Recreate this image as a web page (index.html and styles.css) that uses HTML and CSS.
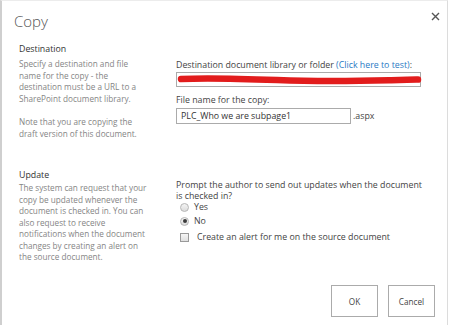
FILE: index.html
```html
<!DOCTYPE html>
<html lang="en">
<head>
<meta charset="utf-8">
<title>Copy</title>
<link rel="stylesheet" href="styles.css">
</head>
<body>
<div class="dialog">
  <header class="titlebar">
    <h1 class="title">Copy</h1>
    <span class="close" aria-label="Close">
      <svg width="9" height="9" viewBox="0 0 9 9"><path d="M1 1L8 8M8 1L1 8" stroke="#555" stroke-width="1.4" fill="none"/></svg>
    </span>
  </header>
  <main class="content">
    <section class="row">
      <div class="left">
        <h2 class="heading">Destination</h2>
        <p class="desc">Specify a destination and file name for the copy - the destination must be a URL to a SharePoint document library.</p>
        <p class="desc note">Note that you are copying the draft version of this document.</p>
      </div>
      <div class="right">
        <div class="label">Destination document library or folder <span class="link">(Click here to test)</span>:</div>
        <div class="field url">
          <svg class="scribble" width="246" height="13" viewBox="0 0 246 13"><path d="M4 6 C 30 4.5, 60 5.5, 100 7 C 140 8.5, 180 8, 212 7.2 C 226 6.8, 236 6.5, 241 6.6" stroke="#e21c1c" stroke-width="6.5" stroke-linecap="round" fill="none"/></svg>
        </div>
        <div class="label file-label">File name for the copy:</div>
        <div class="fileline">
          <div class="field name">PLC_Who we are subpage1</div>
          <span class="ext">.aspx</span>
        </div>
      </div>
    </section>
    <section class="row update">
      <div class="left">
        <h2 class="heading">Update</h2>
        <p class="desc">The system can request that your copy be updated whenever the document is checked in. You can also request to receive notifications when the document changes by creating an alert on the source document.</p>
      </div>
      <div class="right right-update">
        <div class="label prompt">Prompt the author to send out updates when the document is checked in?</div>
        <div class="options">
          <div class="option"><span class="radio"></span><span>Yes</span></div>
          <div class="option"><span class="radio checked"></span><span>No</span></div>
          <div class="option alert"><span class="checkbox"></span><span>Create an alert for me on the source document</span></div>
        </div>
      </div>
    </section>
  </main>
  <footer class="buttons">
    <span class="btn">OK</span>
    <span class="btn">Cancel</span>
  </footer>
</div>
</body>
</html>
```
FILE: styles.css
```css
html, body {
  margin: 0;
  padding: 0;
  background: #fff;
}
body {
  font-family: "Open Sans", "Noto Sans", sans-serif;
  width: 450px;
  height: 325px;
  overflow: hidden;
}
.dialog {
  box-sizing: border-box;
  width: 448px;
  height: 325px;
  border-left: 2px solid #cfcfcf;
  border-top: 1px solid #ececec;
  border-right: 1px solid #dcdcdc;
  display: flex;
  flex-direction: column;
}
.titlebar {
  display: flex;
  justify-content: space-between;
  align-items: flex-start;
  padding: 10px 7px 0 12px;
}
.title {
  margin: 0;
  font-size: 15px;
  line-height: 20px;
  font-weight: 300;
  color: #555;
}
.close {
  display: block;
  margin-top: 1px;
  width: 9px;
  height: 9px;
  line-height: 0;
}
.content {
  padding: 11px 0 0 17px;
}
.row {
  display: flex;
}
.row.update {
  margin-top: 29px;
}
.left {
  width: 132px;
  margin-right: 25px;
}
.heading {
  margin: 0;
  font-size: 8.8px;
  line-height: 14px;
  font-weight: 400;
  color: #333;
}
.desc {
  margin: 2px 0 0;
  font-size: 8.2px;
  line-height: 11.5px;
  color: #858585;
}
.update .desc {
  margin-top: 0;
}
.desc.note {
  margin-top: 12px;
}
.right {
  padding-top: 17px;
  width: 250px;
}
.right-update {
  padding-top: 12px;
}
.label {
  font-size: 8.8px;
  line-height: 12px;
  color: #444;
}
.link {
  color: #2a7ac4;
}
.field {
  box-sizing: border-box;
  border: 1px solid #ababab;
  background: #fff;
}
.field.url {
  margin-top: 1px;
  width: 245px;
  height: 15px;
  position: relative;
}
.scribble {
  position: absolute;
  left: 0;
  top: 0;
}
.file-label {
  margin-top: 7px;
}
.fileline {
  display: flex;
  align-items: center;
  margin-top: 2px;
}
.field.name {
  width: 175px;
  height: 16px;
  font-size: 8.8px;
  line-height: 14px;
  padding-left: 4px;
  color: #333;
}
.ext {
  margin-left: 2px;
  font-size: 8.8px;
  color: #444;
}
.prompt {
  line-height: 11px;
}
.options {
  margin-top: -2px;
}
.option {
  display: flex;
  align-items: center;
  gap: 5px;
  height: 14px;
  font-size: 8.8px;
  color: #444;
  padding-left: 4px;
}
.option.alert {
  margin-top: 2px;
}
.radio {
  box-sizing: border-box;
  width: 9px;
  height: 9px;
  border-radius: 50%;
  border: 1px solid #b5b5b5;
  background: linear-gradient(#f4f4f4, #dcdcdc);
  position: relative;
}
.radio.checked::after {
  content: "";
  position: absolute;
  left: 1.5px;
  top: 1.5px;
  width: 4px;
  height: 4px;
  border-radius: 50%;
  background: #3a3a3a;
}
.checkbox {
  box-sizing: border-box;
  width: 9px;
  height: 9px;
  border: 1px solid #9a9a9a;
  background: linear-gradient(#f6f6f6, #e0e0e0);
  margin-right: 3px;
}
.buttons {
  margin-top: auto;
  display: flex;
  justify-content: flex-end;
  gap: 10px;
  padding: 0 12px 8px 0;
}
.btn {
  box-sizing: border-box;
  width: 47px;
  height: 32px;
  border: 1px solid #ababab;
  display: flex;
  align-items: center;
  justify-content: center;
  font-size: 8.2px;
  color: #444;
  background: #fff;
}
```
